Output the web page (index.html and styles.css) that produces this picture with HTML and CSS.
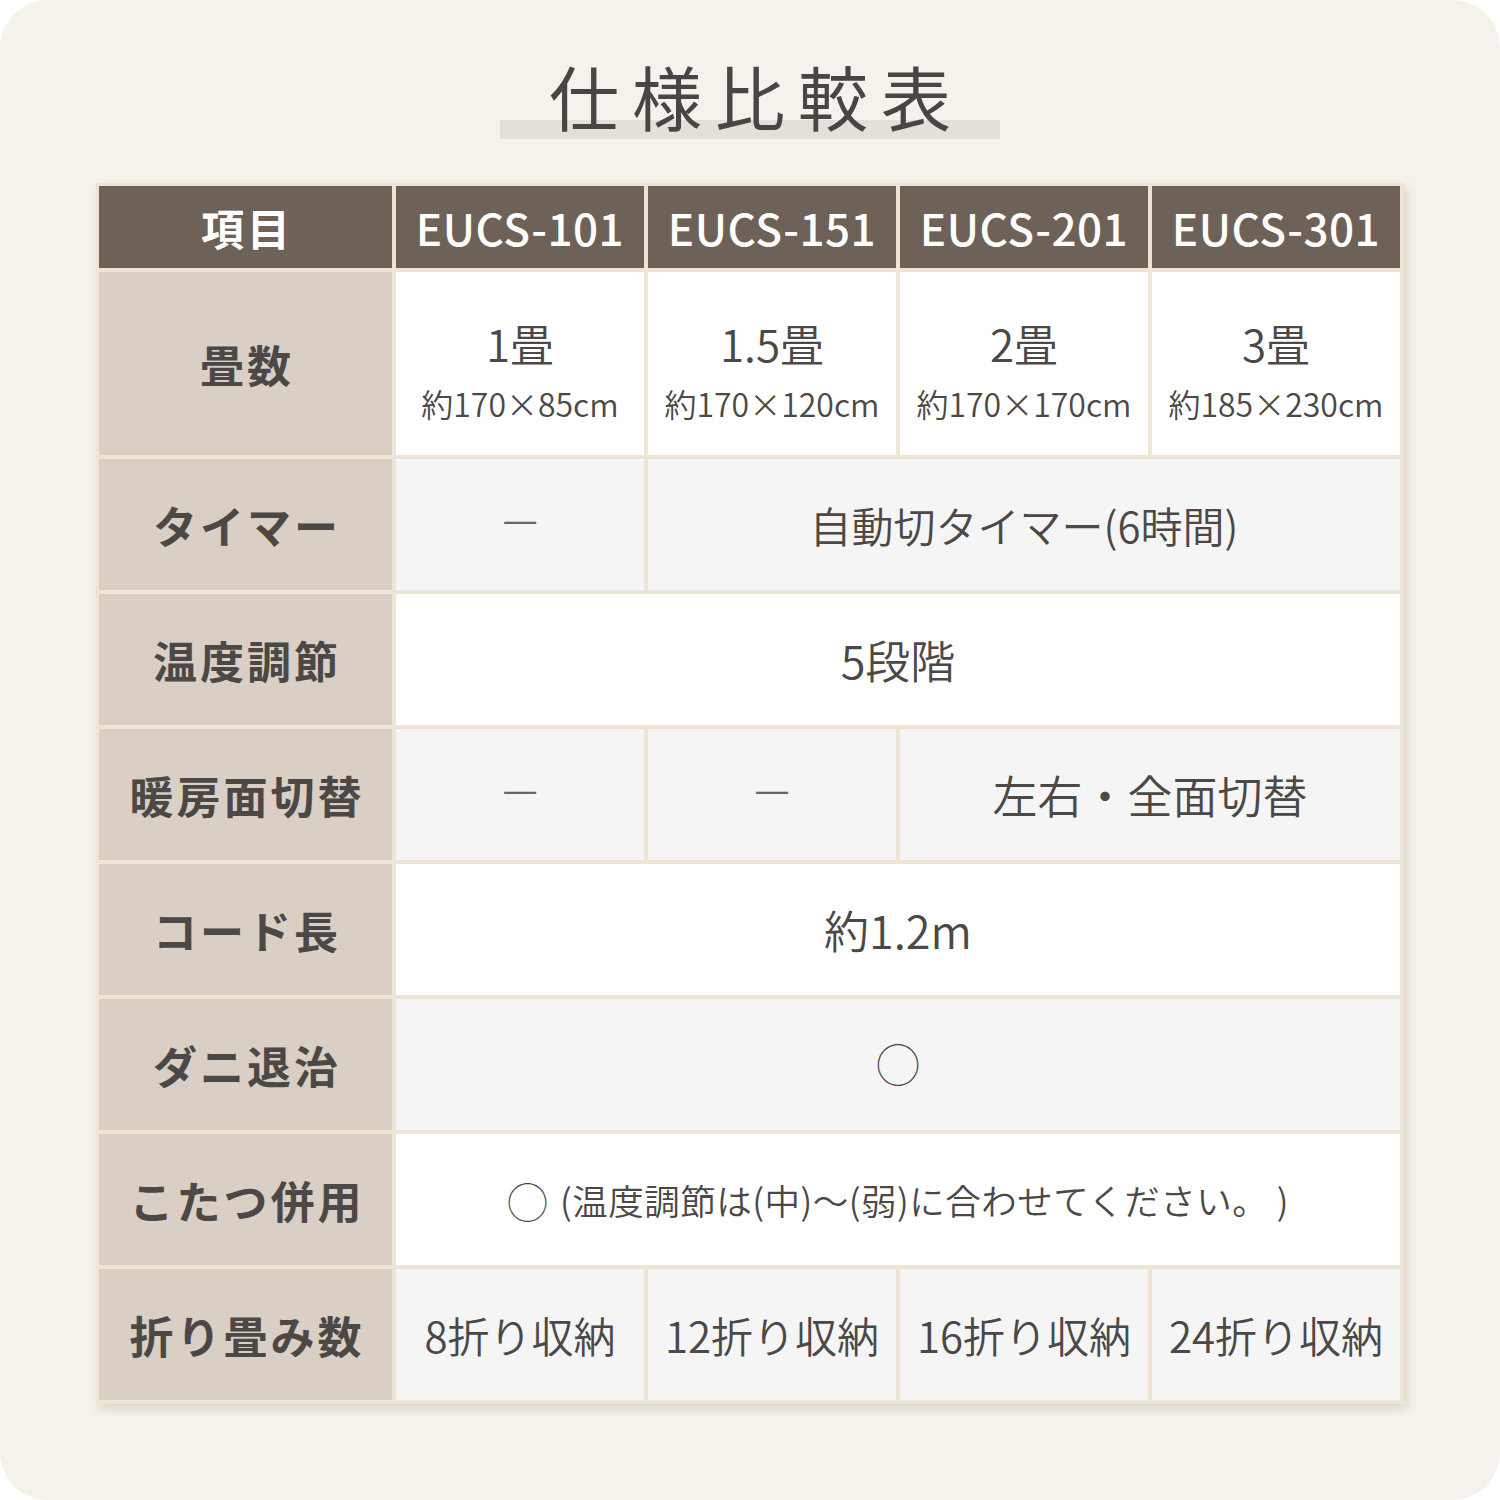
FILE: index.html
```html
<!DOCTYPE html>
<html lang="ja">
<head>
<meta charset="utf-8">
<title>仕様比較表</title>
<link rel="stylesheet" href="styles.css">
</head>
<body>
<div class="page">
  <div class="title-wrap">
    <h1 class="title">仕様比較表</h1>
  </div>
  <div class="table">
    <div class="hd hd-label">項目</div>
    <div class="hd">EUCS-101</div>
    <div class="hd">EUCS-151</div>
    <div class="hd">EUCS-201</div>
    <div class="hd">EUCS-301</div>

    <div class="lb">畳数</div>
    <div class="cell w size"><span class="main">1畳</span><span class="sub">約170×85cm</span></div>
    <div class="cell w size"><span class="main">1.5畳</span><span class="sub">約170×120cm</span></div>
    <div class="cell w size"><span class="main">2畳</span><span class="sub">約170×170cm</span></div>
    <div class="cell w size"><span class="main">3畳</span><span class="sub">約185×230cm</span></div>

    <div class="lb">タイマー</div>
    <div class="cell g dash">—</div>
    <div class="cell g span3 timer">自動切タイマー(6時間)</div>

    <div class="lb">温度調節</div>
    <div class="cell w span4">5段階</div>

    <div class="lb">暖房面切替</div>
    <div class="cell g dash">—</div>
    <div class="cell g dash">—</div>
    <div class="cell g span2">左右・全面切替</div>

    <div class="lb">コード長</div>
    <div class="cell w span4">約1.2m</div>

    <div class="lb">ダニ退治</div>
    <div class="cell g span4 circle">◯</div>

    <div class="lb">こたつ併用</div>
    <div class="cell w span4 note"><span class="circ-s">◯</span><span class="note-txt">(温度調節は(中)〜(弱)に合わせてください。 )</span></div>

    <div class="lb">折り畳み数</div>
    <div class="cell g fold">8折り収納</div>
    <div class="cell g fold">12折り収納</div>
    <div class="cell g fold">16折り収納</div>
    <div class="cell g fold">24折り収納</div>
  </div>
</div>
</body>
</html>
```
FILE: styles.css
```css
html, body {
  margin: 0;
  padding: 0;
  background: #ffffff;
}
body {
  font-family: "Noto Sans CJK JP", "Noto Sans", sans-serif;
}
.page {
  width: 1500px;
  height: 1500px;
  box-sizing: border-box;
  background: #f5f2eb;
  border-radius: 48px;
  padding-top: 56px;
  display: flex;
  flex-direction: column;
  align-items: center;
}
.title-wrap {
  width: 500px;
  height: 83px;
  display: flex;
  justify-content: center;
  background: linear-gradient(to bottom, transparent 0, transparent 64px, #e4e0d8 64px, #e4e0d8 83px);
  margin-bottom: 44px;
}
.title {
  margin: 0;
  font-weight: 400;
  font-size: 70px;
  line-height: 90px;
  height: 83px;
  letter-spacing: 13px;
  padding-left: 13px;
  color: #484644;
  margin-top: -5px;
}
.table {
  display: grid;
  grid-template-columns: 293px repeat(4, 248px);
  grid-template-rows: 82px 183px repeat(7, 131px);
  gap: 4px;
  padding: 3px 4px 4px 3px;
  background: #efe5d4;
  box-shadow: 3px 5px 9px rgba(80, 60, 40, 0.16);
}
.hd {
  background: #6e6158;
  color: #ffffff;
  display: flex;
  align-items: center;
  justify-content: center;
  font-size: 44px;
  font-weight: 500;
  letter-spacing: 0.5px;
}
.hd-label {
  font-weight: 700;
  font-size: 43px;
  letter-spacing: 3px;
  padding-left: 3px;
}
.lb {
  background: #d9cfc5;
  color: #4b4846;
  display: flex;
  align-items: center;
  justify-content: center;
  font-size: 44px;
  font-weight: 700;
  letter-spacing: 3px;
  padding-left: 3px;
}
.cell {
  display: flex;
  align-items: center;
  justify-content: center;
  color: #4b4846;
  font-size: 45px;
  font-weight: 350;
  box-sizing: border-box;
}
.w { background: #ffffff; }
.g { background: #f5f5f5; }
.span2 { grid-column: span 2; }
.span3 { grid-column: span 3; }
.span4 { grid-column: span 4; }
.size {
  flex-direction: column;
  padding-top: 14px;
}
.size .main {
  font-size: 44px;
  line-height: 56px;
  margin-top: -4px;
}
.size .sub {
  font-size: 32px;
  line-height: 40px;
  margin-top: 12px;
}
.timer {
  font-size: 42px;
}
.fold {
  font-size: 42px;
}
.dash {
  font-size: 40px;
  color: #6a6664;
  padding-bottom: 16px;
}
.circle {
  font-size: 44px;
  font-weight: 300;
  padding-bottom: 4px;
}
.note {
  font-size: 35.5px;
}
.circ-s {
  font-size: 41px;
  font-weight: 300;
  margin-right: 12px;
}
.note-txt {
  letter-spacing: 0.5px;
}
```
